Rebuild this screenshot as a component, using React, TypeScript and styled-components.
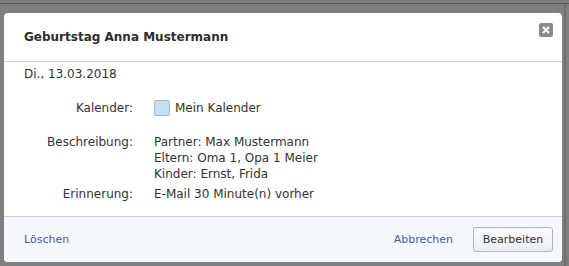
import React from 'react'
import styled, { createGlobalStyle } from 'styled-components'

const GlobalStyle = createGlobalStyle`
  html, body {
    margin: 0;
    padding: 0;
    background: #7f7f7f;
    width: 569px;
    height: 266px;
    overflow: hidden;
  }
  body {
    font-family: Tahoma, "DejaVu Sans", sans-serif;
  }
`

const Backdrop = styled.div`
  position: relative;
  width: 569px;
  height: 266px;
  background: #7f7f7f;
  border-top: 1px solid #7a7a7a;
  box-sizing: border-box;
  padding: 12px 0 0 4px;

  &::before {
    content: '';
    position: absolute;
    left: 0;
    right: 0;
    top: 2px;
    height: 1px;
    background: #5c5c5c;
  }

  &::after {
    content: '';
    position: absolute;
    top: 3px;
    bottom: 0;
    right: 3px;
    width: 2px;
    background: #6e6e6e;
  }
`

const Dialog = styled.div`
  position: relative;
  width: 558px;
  height: 249px;
  background: #fff;
  border-radius: 4px;
  display: flex;
  flex-direction: column;
  overflow: hidden;
  color: #333;
  font-size: 12px;
`

const Header = styled.div`
  height: 48px;
  display: flex;
  align-items: center;
  padding: 0 20px;
  border-bottom: 1px solid #c7d7e7;
`

const Title = styled.h1`
  margin: 0;
  font-size: 12px;
  font-weight: bold;
  color: #2e2e2e;
`

const CloseButton = styled.button`
  position: absolute;
  top: 10px;
  right: 9px;
  width: 14px;
  height: 14px;
  padding: 0;
  border: none;
  border-radius: 2px;
  background: #8c8c8c;
  display: flex;
  align-items: center;
  justify-content: center;
`

const Body = styled.div`
  flex: 1;
  padding: 4px 20px 0;
`

const DateLine = styled.div`
  line-height: 16px;
  margin-bottom: 18px;
`

const Details = styled.div`
  display: grid;
  grid-template-columns: 109px 1fr;
  column-gap: 21px;
  line-height: 16px;
`

const Label = styled.div<{ $spaced?: boolean }>`
  text-align: right;
  margin-bottom: ${p => (p.$spaced ? '18px' : '4px')};
`

const Value = styled.div<{ $spaced?: boolean }>`
  display: flex;
  align-items: center;
  margin-bottom: ${p => (p.$spaced ? '18px' : '4px')};
`

const Lines = styled.div`
  display: flex;
  flex-direction: column;
`

const ColorBox = styled.span`
  width: 14px;
  height: 14px;
  border: 1px solid #a9b7c6;
  border-radius: 2px;
  background: #c5e0f5;
  margin-right: 5px;
`

const Footer = styled.div`
  height: 45px;
  display: flex;
  align-items: center;
  padding: 0 9px 0 20px;
  border-top: 1px solid #c9d4e0;
  background: #f5f8fc;
`

const Link = styled.a`
  color: #3b5fae;
  text-decoration: none;
  font-size: 11px;
  cursor: pointer;
`

const Spacer = styled.div`
  flex: 1;
`

const Button = styled.button`
  margin-left: 20px;
  width: 80px;
  height: 25px;
  border: 1px solid #a8b2c4;
  border-radius: 3px;
  background: linear-gradient(#fdfdfe, #e9edf4);
  color: #333;
  font-family: inherit;
  font-size: 11px;
  padding: 0;
`

const App: React.FC = () => {
  return (
    <>
      <GlobalStyle />
      <Backdrop>
        <Dialog>
          <Header>
            <Title>Geburtstag Anna Mustermann</Title>
          </Header>
          <CloseButton aria-label="Schließen">
            <svg width="8" height="8" viewBox="0 0 8 8">
              <path d="M1 1 L7 7 M7 1 L1 7" stroke="#fff" strokeWidth="2" />
            </svg>
          </CloseButton>
          <Body>
            <DateLine>Di., 13.03.2018</DateLine>
            <Details>
              <Label $spaced>Kalender:</Label>
              <Value $spaced>
                <ColorBox />
                Mein Kalender
              </Value>
              <Label>Beschreibung:</Label>
              <Value>
                <Lines>
                  <span>Partner: Max Mustermann</span>
                  <span>Eltern: Oma 1, Opa 1 Meier</span>
                  <span>Kinder: Ernst, Frida</span>
                </Lines>
              </Value>
              <Label>Erinnerung:</Label>
              <Value>E-Mail 30 Minute(n) vorher</Value>
            </Details>
          </Body>
          <Footer>
            <Link>Löschen</Link>
            <Spacer />
            <Link>Abbrechen</Link>
            <Button>Bearbeiten</Button>
          </Footer>
        </Dialog>
      </Backdrop>
    </>
  )
}

export default App
